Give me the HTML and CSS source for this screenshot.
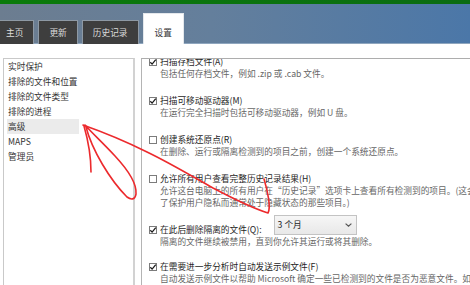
FILE: index.html
```html
<!DOCTYPE html>
<html lang="zh-CN">
<head>
<meta charset="utf-8">
<title>设置</title>
<link rel="stylesheet" href="styles.css">
</head>
<body>
<div class="app">
  <header class="topbar">
    <div class="greenbar"></div>
    <nav class="tabs">
      <div class="tab first">主页</div>
      <div class="tab">更新</div>
      <div class="tab">历史记录</div>
      <div class="tab active">设置</div>
    </nav>
  </header>
  <main class="content">
    <aside class="sidebar">
      <ul class="nav-list">
        <li>实时保护</li>
        <li>排除的文件和位置</li>
        <li>排除的文件类型</li>
        <li>排除的进程</li>
        <li class="selected">高级</li>
        <li>MAPS</li>
        <li>管理员</li>
      </ul>
    </aside>
    <section class="settings">
      <div class="settings-scroll">
        <div class="option">
          <div class="opt-title"><span class="cb"><svg viewBox="0 0 8 8"><polyline points="1.3,4.2 3.1,6.1 6.8,1.6"/></svg></span><span>扫描存档文件(A)</span></div>
          <div class="opt-desc">包括任何存档文件，例如 .zip 或 .cab 文件。</div>
        </div>
        <div class="option">
          <div class="opt-title"><span class="cb"><svg viewBox="0 0 8 8"><polyline points="1.3,4.2 3.1,6.1 6.8,1.6"/></svg></span><span>扫描可移动驱动器(M)</span></div>
          <div class="opt-desc">在运行完全扫描时包括可移动驱动器，例如 U 盘。</div>
        </div>
        <div class="option">
          <div class="opt-title"><span class="cb"></span><span>创建系统还原点(R)</span></div>
          <div class="opt-desc">在删除、运行或隔离检测到的项目之前，创建一个系统还原点。</div>
        </div>
        <div class="option">
          <div class="opt-title"><span class="cb"></span><span>允许所有用户查看完整历史记录结果(H)</span></div>
          <div class="opt-desc">允许这台电脑上的所有用户在“历史记录”选项卡上查看所有检测到的项目。(这会显示为<br>了保护用户隐私而通常处于隐藏状态的那些项目。)</div>
        </div>
        <div class="option option-select">
          <div class="opt-title"><span class="cb"><svg viewBox="0 0 8 8"><polyline points="1.3,4.2 3.1,6.1 6.8,1.6"/></svg></span><span>在此后删除隔离的文件(Q):</span>
            <div class="dropdown"><span>3 个月</span><svg class="chev" viewBox="0 0 7 4"><polyline points="0.6,0.6 3.5,3.2 6.4,0.6"/></svg></div>
          </div>
          <div class="opt-desc">隔离的文件继续被禁用，直到你允许其运行或将其删除。</div>
        </div>
        <div class="option">
          <div class="opt-title"><span class="cb"><svg viewBox="0 0 8 8"><polyline points="1.3,4.2 3.1,6.1 6.8,1.6"/></svg></span><span>在需要进一步分析时自动发送示例文件(F)</span></div>
          <div class="opt-desc">自动发送示例文件以帮助 Microsoft 确定一些已检测到的文件是否为恶意文件。如果<br>示例文件可能包含个人信息，我们将在发送之前通知你。</div>
        </div>
      </div>
    </section>
  </main>
  <svg class="annotation" viewBox="0 0 470 285" width="470" height="285">
    <path d="M 83 125 C 100 131 125 141 147 152 C 170 163 195 178 213 188 C 232 198 252 208 268 213 C 271 208 268 192 264 179"/>
    <path d="M 84 126 C 88 140 91 157 91 172"/>
    <path d="M 86 127 C 92 150 110 180 127 197 C 131 200 135 200 136 194 C 137 184 128 170 115 156 C 103 143 92 133 85 125"/>
  </svg>
</div>
</body>
</html>
```

FILE: styles.css
```css
html, body {
  margin: 0;
  padding: 0;
  height: 100%;
  overflow: hidden;
  background: #fff;
}

body {
  font-family: "Noto Sans CJK SC", "Noto Sans", sans-serif;
  font-size: 8.7px;
  color: #222;
}

.app {
  position: relative;
  height: 100%;
  display: flex;
  flex-direction: column;
}

.topbar {
  height: 44px;
  flex: 0 0 44px;
  display: flex;
  flex-direction: column;
  background: linear-gradient(to right, #6c7d90 0%, #647f9c 45%, #4b77a8 100%);
  box-shadow: inset 0 -1px 0 #8fa6be;
}

.greenbar {
  height: 4px;
  flex: 0 0 4px;
  background: linear-gradient(to right, #0a7b0b, #0b6c12);
}

.tabs {
  flex: 1;
  display: flex;
  align-items: flex-end;
  gap: 4px;
}

.tab {
  box-sizing: border-box;
  height: 24px;
  padding: 6px 10px 5px;
  line-height: 12px;
  background: #3e3e3e;
  color: #dcdcdc;
  border: 1px solid #8e99a4;
  border-bottom: none;
  white-space: nowrap;
}

.tab.first {
  margin-left: -5px;
}

.tab.active {
  height: 31px;
  padding: 13px 11px 5px;
  background: #fff;
  color: #333;
  border-color: #e4e8ec;
}

.content {
  flex: 1;
  display: flex;
  gap: 6px;
  padding: 14px 0 0 3px;
  overflow: hidden;
  min-height: 0;
}

.sidebar {
  box-sizing: border-box;
  flex: 0 0 132px;
  border: 1px solid #c9c9c9;
  border-right: 2px solid #d2d2d2;
  border-bottom: none;
}

.nav-list {
  list-style: none;
  margin: 0;
  padding: 0;
}

.nav-list li {
  width: 71px;
  margin-left: 3px;
  padding-left: 1px;
  line-height: 15px;
  height: 15px;
  color: #333;
  white-space: nowrap;
}

.nav-list li.selected {
  background: #ebebeb;
}

.settings {
  flex: 0 0 400px;
  border-top: 1px solid #adadad;
  border-left: 1px solid #b4b4b4;
  overflow: hidden;
}

.settings-scroll {
  margin-top: -3px;
  padding-left: 7px;
}

.option {
  margin-bottom: 15px;
}

.option-select {
  margin-bottom: 13px;
}

.opt-title {
  display: flex;
  align-items: center;
  height: 12px;
  line-height: 12px;
  gap: 3px;
  color: #1e1e1e;
  white-space: nowrap;
}

.cb {
  box-sizing: border-box;
  width: 8px;
  height: 8px;
  flex: 0 0 8px;
  border: 1px solid #7c7c7c;
  background: #fff;
  display: flex;
}

.cb svg {
  width: 8px;
  height: 8px;
  margin: -1px;
  fill: none;
  stroke: #1a1a1a;
  stroke-width: 1.3;
}

.opt-desc {
  padding-left: 11px;
  line-height: 12px;
  color: #666;
  white-space: nowrap;
}

.dropdown {
  box-sizing: border-box;
  align-self: flex-start;
  margin-top: -9px;
  margin-left: 9px;
  flex: 0 0 83px;
  height: 20px;
  border: 1px solid #c3c3c3;
  background: linear-gradient(#f6f6f6, #e8e8e8);
  display: flex;
  align-items: center;
  justify-content: space-between;
  padding: 0 4px 0 3px;
  color: #222;
  line-height: 18px;
}

.chev {
  width: 7px;
  height: 4px;
  fill: none;
  stroke: #555;
  stroke-width: 1.2;
}

.annotation {
  position: absolute;
  left: 0;
  top: 0;
  pointer-events: none;
  fill: none;
  stroke: #ec2a2d;
  stroke-width: 1.6;
  stroke-linecap: round;
  stroke-linejoin: round;
}
```
